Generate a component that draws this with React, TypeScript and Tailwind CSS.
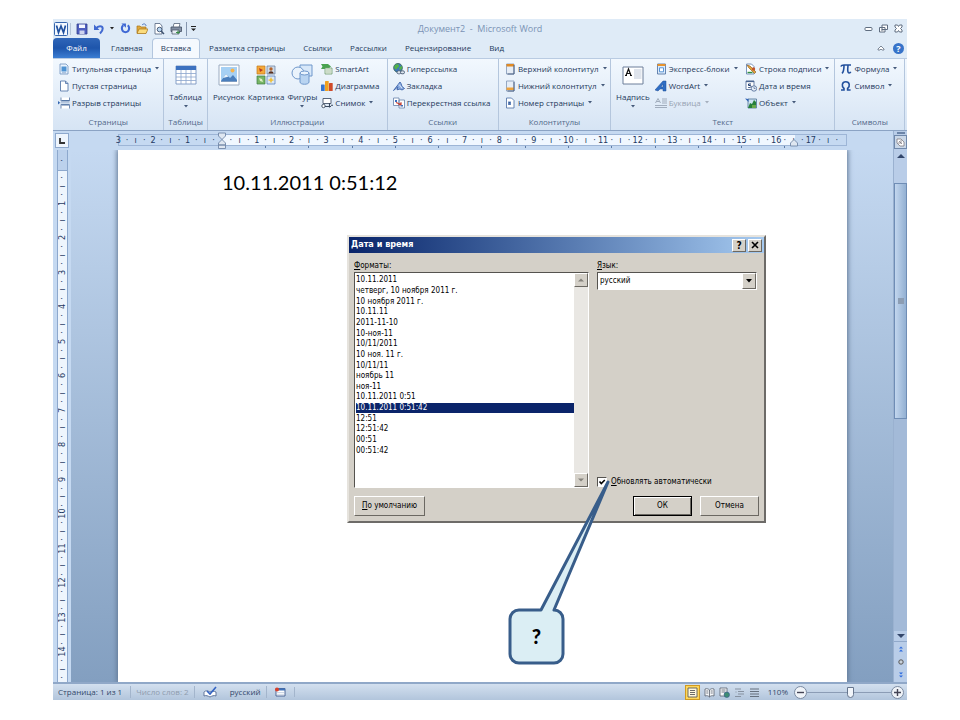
import { useState } from "react"
import type { ReactNode } from "react"

const icons: Record<string, ReactNode> = {
  titlePage: (
    <>
      <path d="M2 1h6l2 2v8H2z" fill="#eaf3fd" stroke="#6d90bd" strokeWidth=".8" />
      <path d="M3.500 3.500h5v5h-5z" fill="#4f93d2" />
      <path d="M4 9.700h4" stroke="#6d90bd" strokeWidth=".6" />
    </>
  ),
  blankPage: <path d="M2.500 1h5l2.500 2.500V11h-7.500zM7.500 1v2.500H10" fill="#fff" stroke="#5a7bab" strokeWidth=".9" />,
  pageBreak: (
    <>
      <path d="M3 .500v3.500h8.500V.500M3 11.500V7.500h8.500v4" fill="#fff" stroke="#6482ad" strokeWidth=".9" />
      <path d="M3.500 3.500h7.500M3.500 8h7.500" stroke="#5577a5" strokeWidth="1.200" />
      <path d="M2.500 5.800h9" stroke="#8da5c5" strokeWidth=".7" />
      <path d="M0 4 2.200 5.800 0 7.600z" fill="#3567b1" />
    </>
  ),
  smartArt: (
    <>
      <path d="M0 1h7l3 2.500-3 2.500H0l1.500-2.500z" fill="#49a350" />
      <path d="M4 5h7v6H4z" fill="#eef5e8" stroke="#6c9a70" strokeWidth=".8" />
      <path d="M5 7h5M5 9h5" stroke="#8eaf90" strokeWidth=".7" />
    </>
  ),
  chart: (
    <>
      <rect x="0" y="4.500" width="3.700" height="6.500" rx=".6" fill="#3474cf" />
      <rect x="4" y="1" width="3.700" height="10" rx=".6" fill="#f0a020" />
      <rect x="8" y="3" width="3.700" height="8" rx=".6" fill="#cf4a2a" />
    </>
  ),
  screenshot: (
    <>
      <path d="M2 1.500h8v5H2z" fill="#fff" stroke="#47566b" strokeWidth=".9" />
      <path d="M3 9.500h7M8.500 6v4.500M10 8.200h2" fill="none" stroke="#39495e" strokeWidth="1.100" />
      <circle cx="2.500" cy="9" r="1.700" fill="#fff" stroke="#39495e" strokeWidth=".9" />
    </>
  ),
  link: (
    <>
      <circle cx="5" cy="4.800" r="4.400" fill="#3f78bb" stroke="#2d5a43" strokeWidth=".7" />
      <path d="M1.500 3C3 .800 5.500 1 6 2.500S4 4.500 3.500 6.500C2 6.300.800 5 1.500 3zM6 5l2.500-2.500L9.200 5 7 7.500z" fill="#52b446" />
      <rect x="4" y="7.800" width="4" height="3" rx="1.500" fill="#dde5ee" stroke="#4c5d76" strokeWidth=".9" />
      <rect x="7.500" y="7.800" width="4" height="3" rx="1.500" fill="#dde5ee" stroke="#4c5d76" strokeWidth=".9" />
    </>
  ),
  bookmark: (
    <>
      <path d="M.500 10.500 4 6l3-4 1 1.500 1 3 2.500 2-2.500 1.500-2-1-3 .8 1-3z" fill="#8fb0e4" stroke="#3c62a8" strokeWidth=".9" />
      <path d="M6 4.500 9 8" stroke="#fff" strokeWidth=".7" />
    </>
  ),
  crossRef: (
    <>
      <path d="M.500 1h5.500v7.500H.500zM6 3h5.500v8H6z" fill="#fff" stroke="#6680a8" strokeWidth=".8" />
      <path d="M2 3h2v2H2zM7.500 8h2.500v1.500H7.500z" fill="#3b6fc0" />
      <path d="M3 5.500 8 7.500M8 5.200v2.500H5.500" fill="none" stroke="#c43d31" strokeWidth="1.200" />
    </>
  ),
  header: (
    <>
      <path d="M2.500 1h7.500v10H2.500z" fill="#e6edf6" stroke="#7f95b5" strokeWidth=".8" />
      <path d="M2.500 1h7.500v2.500H2.500z" fill="#e08a25" />
      <path d="M10 2v9H3.500" fill="none" stroke="#4c6285" />
    </>
  ),
  footer: (
    <>
      <path d="M2.500 1h7.500v10H2.500z" fill="#e6edf6" stroke="#7f95b5" strokeWidth=".8" />
      <path d="M2.500 7.500h7.500V10H2.500z" fill="#eda23c" />
      <path d="M10 2v9H3.500" fill="none" stroke="#4c6285" />
    </>
  ),
  pageNumber: (
    <>
      <path d="M2.500 1h5L10 3.500V11H2.500z" fill="#fff" stroke="#5a7bab" strokeWidth=".9" />
      <path d="M4 4.500h3v3.500H4z" fill="#6d8fc4" />
      <path d="M4.800 5.500h1.500M4.800 7h1.500" stroke="#21457f" strokeWidth=".7" />
    </>
  ),
  quickParts: (
    <>
      <path d="M2.500 1h8v10h-8z" fill="#dcebfb" stroke="#46699d" strokeWidth=".8" />
      <path d="M2.500 1h8v2h-8z" fill="#e7932c" />
      <path d="M4.500 4.800h4v4h-4z" fill="#fff" stroke="#4a8ad0" strokeWidth=".9" />
    </>
  ),
  wordArt: (
    <path d="M0 10 8 1h3v10H8V9H5l-2 2zM6 7h2V4z" fill="#2f6ec4" stroke="#1f4d96" strokeWidth=".5" fillRule="evenodd" />
  ),
  dropCap: (
    <path d="M.500 6 3 1.500 5.500 6M1.500 4.500h3M7 2h5M7 4h5M7 6h5M0 8.500h12M0 10.500h12" fill="none" stroke="#9aa6b6" strokeWidth=".9" />
  ),
  signature: (
    <>
      <path d="M1.500 1h5L9 3.500V11H1.500z" fill="#fff" stroke="#5a7bab" strokeWidth=".8" />
      <path d="m2 2 3 1 6 6-1.500 1.500-6-6z" fill="#e3a43c" stroke="#80551c" strokeWidth=".6" />
      <circle cx="8.500" cy="6" r="1.700" fill="#c2562d" />
      <path d="M2.500 9.500h5" stroke="#2f8f40" strokeWidth="1.400" />
    </>
  ),
  dateTime: (
    <>
      <path d="M1 1h8v8.500H1z" fill="#fff" stroke="#4a6692" strokeWidth=".8" />
      <path d="M1 1.500h8" stroke="#4a6692" strokeWidth="1.300" />
      <path d="M6 4H3.500v1.500h1.500c2 0 1.500 2.500-1.700 2" fill="none" stroke="#1f3d70" />
      <circle cx="9" cy="8.500" r="2.700" fill="#e8f1fb" stroke="#4a6692" strokeWidth=".8" />
      <path d="M9 7v1.500h1.500" fill="none" stroke="#4a6692" strokeWidth=".7" />
    </>
  ),
  object: (
    <>
      <path d="M3 2h8.500v9H3z" fill="#cfe3f3" stroke="#4b7292" strokeWidth=".8" />
      <path d="M3 11 5 6l2 1 2-4 2 2v6z" fill="#27803a" />
      <path d="M0 1.500l3.500.500v3z" fill="#2e62b5" />
      <path d="M7 8h4v3H7z" fill="#6aa84b" />
    </>
  ),
  pi: <path d="M.800 3.500C1.500 2 2.500 2 4 2h7M4 2.500C4 6 3.500 9 2 10.300M8 2.500c-.4 4-.6 7.500 1.200 7.500.8 0 1.300-.5 1.500-1.200" fill="none" stroke="#22509d" strokeWidth="1.600" />,
  omega: <path d="M1 10h3V8.500C1.300 6.500 1.800 1.800 5.800 1.800S10.300 6.500 7.600 8.500V10h3" fill="none" stroke="#22509d" strokeWidth="1.600" />,
  save: (
    <>
      <path d="M1 1h10v10H1z" fill="#4f5fc0" stroke="#333f8e" strokeWidth=".8" />
      <path d="M3 1.500h6V5H3z" fill="#f4f7ff" />
      <path d="M3.500 7.500h5V11h-5z" fill="#cdd4ee" />
    </>
  ),
  undo: (
    <>
      <path d="M3 5.500C5 2.500 9.500 2.500 9.700 5.500 9.800 7.500 8.500 9 7 10.500" fill="none" stroke="#4169d0" strokeWidth="2" />
      <path d="M1 1.500V7h5.500z" fill="#4169d0" />
    </>
  ),
  redo: (
    <>
      <path d="M3.500 2.500C.800 5 2 10 6 10s5.200-5 2.500-7.500" fill="none" stroke="#3f68d4" strokeWidth="2.200" />
      <path d="M1.500.500h5v4.800z" fill="#3f68d4" />
    </>
  ),
  open: (
    <>
      <path d="M1 10V3h3l1 1h5v6z" fill="#e0a93c" stroke="#a87418" strokeWidth=".7" />
      <path d="M1 10.500 3 6h9l-2 4.500z" fill="#fbdc7d" stroke="#a87418" strokeWidth=".7" />
      <path d="M6 2c2-2 4-1 4 1" fill="none" stroke="#4d76bd" />
    </>
  ),
  preview: (
    <>
      <path d="M2 .5h5L9 3v8H2z" fill="#fff" stroke="#50627e" strokeWidth=".8" />
      <circle cx="6.500" cy="6.500" r="2.300" fill="#b9d7f3" stroke="#3e526f" strokeWidth=".9" />
      <path d="m8 8 3 3" stroke="#3e526f" strokeWidth="1.400" />
    </>
  ),
  print: (
    <>
      <path d="M4 .500h6L9 4.500H3z" fill="#fff" stroke="#56647a" strokeWidth=".8" />
      <path d="M1 4h10.500v4.500H1z" fill="#8390a4" stroke="#424e62" strokeWidth=".8" />
      <path d="M2 7h7v4H2z" fill="#e8edf4" stroke="#424e62" strokeWidth=".7" />
      <path d="M6 9.500h4M8 7.500v3.500" stroke="#3c8c48" strokeWidth="1.200" />
    </>
  ),
}

function Icon({ name, className = "size-3" }: { name: string; className?: string }) {
  return (
    <svg viewBox="0 0 12 12" className={`${className} shrink-0`} aria-hidden="true">
      {icons[name]}
    </svg>
  )
}

function Caret({ className = "fill-[#44597a]" }: { className?: string }) {
  return (
    <svg viewBox="0 0 4 3" className={`w-1 h-[3px] shrink-0 ${className}`} aria-hidden="true">
      <path d="M0 0h4L2 2.500z" />
    </svg>
  )
}

type Item = { icon: string; label: string; menu?: boolean; disabled?: boolean }

function SmallButtons({ items }: { items: Item[] }) {
  return (
    <div className="flex flex-col">
      {items.map((item) => (
        <button
          key={item.label}
          disabled={item.disabled}
          className="flex h-[17px] items-center gap-[2px] whitespace-nowrap disabled:text-[#98a3b3]"
        >
          <Icon name={item.icon} />
          <span>{item.label}</span>
          {item.menu && <Caret className={item.disabled ? "ml-[2px] fill-[#a5afbd]" : "ml-[2px] fill-[#44597a]"} />}
        </button>
      ))}
    </div>
  )
}

function BigButton({ label, menu, children }: { label: string; menu?: boolean; children: ReactNode }) {
  return (
    <button className="flex flex-col items-center pt-1 whitespace-nowrap">
      <svg viewBox="0 0 22 22" className="size-[22px]" aria-hidden="true">
        {children}
      </svg>
      <span className="mt-1 mb-[2px] h-[13px] leading-[13px]">{label}</span>
      {menu && <Caret />}
    </button>
  )
}

function Group({ title, className, children }: { title: string; className: string; children: ReactNode }) {
  return (
    <section className={`flex min-w-0 flex-col border-r border-[#b4c6dd] pt-px ${className}`}>
      <div className="flex flex-1 items-start px-[5px]">{children}</div>
      <h2 className="h-4 text-center leading-4 text-[#52698a]">{title}</h2>
    </section>
  )
}

const tabs = ["Главная", "Вставка", "Разметка страницы", "Ссылки", "Рассылки", "Рецензирование", "Вид"]

function TitleBar() {
  return (
    <header className="flex h-[19px] items-center bg-[#dfebf7] pr-1 pl-px">
      <svg viewBox="0 0 14 14" className="size-[14px]" aria-hidden="true">
        <rect x=".5" y=".5" width="13" height="13" rx="1" fill="#f4f9ff" stroke="#3666ae" />
        <path d="m2.500 3.500 2 7L7 4l2.500 6.500 2-7" fill="none" stroke="#1f509f" strokeWidth="1.700" />
      </svg>
      <div className="ml-[2px] flex items-center gap-[5px] border-l border-[#b4c4d8] pl-[5px]">
        <button aria-label="Сохранить"><Icon name="save" /></button>
        <button aria-label="Отменить" className="flex items-center gap-[5px]"><Icon name="undo" /><Caret className="fill-[#222]" /></button>
        <button aria-label="Повторить" className="ml-px"><Icon name="redo" className="size-[11px]" /></button>
        <button aria-label="Открыть"><Icon name="open" /></button>
        <button aria-label="Просмотр"><Icon name="preview" /></button>
        <button aria-label="Печать"><Icon name="print" /></button>
      </div>
      <button aria-label="Настройка панели" className="ml-1 border-l border-[#8495ad] px-1 py-1">
        <svg viewBox="0 0 5 6" className="h-[6px] w-[5px]" aria-hidden="true">
          <path d="M0 0h5v1H0zM0 2.500h5L2.500 5z" fill="#222" />
        </svg>
      </button>
      <h1 className="flex-1 pr-26 text-center text-[9px] whitespace-pre text-[#7b93b5]">{"Документ2  -  Microsoft Word"}</h1>
      <div className="flex items-center gap-[6px]">
        <button aria-label="Свернуть">
          <svg viewBox="0 0 9 9" className="size-[9px]"><rect x="1" y="3.500" width="7" height="3" rx="1" fill="#fff" stroke="#5f6d80" /></svg>
        </button>
        <button aria-label="Восстановить">
          <svg viewBox="0 0 9 9" className="size-[9px]"><path d="M3 1h5.500v4.500H3zM.500 3.500H6V8H.500zM2 6h2.500" fill="#fff" stroke="#5f6d80" /></svg>
        </button>
        <button aria-label="Закрыть">
          <svg viewBox="0 0 9 9" className="size-[9px]">
            <path d="M1 1h2.500l1 1.500 1-1.500H8v2L6.500 4.500 8 6v2H5.500l-1-1.500-1 1.500H1V6l1.500-1.500L1 3z" fill="#fff" stroke="#5f6d80" />
          </svg>
        </button>
      </div>
    </header>
  )
}

function Ribbon() {
  return (
    <>
      <nav className="flex h-5 items-stretch bg-[#dfebf7] pr-[3px]">
        <button className="mr-[2px] w-[47px] rounded-t-sm bg-linear-to-b from-[#2f66b9] via-[#1e55ab] to-[#3c7ed3] text-white">Файл</button>
        {tabs.map((tab) => (
          <button
            key={tab}
            className={
              tab === "Вставка"
                ? "rounded-t-sm border border-b-0 border-[#b3c6de] bg-[#f5f9fe] px-2 pb-px whitespace-nowrap"
                : "px-[9px] whitespace-nowrap"
            }
          >
            {tab}
          </button>
        ))}
        <div className="flex flex-1 items-center justify-end gap-2">
          <button aria-label="Свернуть ленту">
            <svg viewBox="0 0 8 6" className="h-[6px] w-2"><path d="M1 4 4 1l3 3v1H5L4 4 3 5H1z" fill="#fff" stroke="#5f6d80" strokeWidth=".8" /></svg>
          </button>
          <button aria-label="Справка" className="size-[11px] rounded-full bg-[#3773c9] text-[9px] leading-[11px] font-bold text-white">?</button>
        </div>
      </nav>
      <div className="flex h-[73px] border-t border-b border-t-[#b9cbe2] border-b-[#8ba3c4] bg-linear-to-b from-[#f2f8fe] to-[#d6e4f4]">
        <Group title="Страницы" className="flex-[111_1_0%]">
          <SmallButtons
            items={[
              { icon: "titlePage", label: "Титульная страница", menu: true },
              { icon: "blankPage", label: "Пустая страница" },
              { icon: "pageBreak", label: "Разрыв страницы" },
            ]}
          />
        </Group>
        <Group title="Таблицы" className="flex-[43_1_0%]">
          <div className="flex flex-1 justify-center">
            <BigButton label="Таблица" menu>
              <path d="M1 2h20v18H1z" fill="#fff" stroke="#6d8cba" strokeWidth=".8" />
              <path d="M1 2h20v4H1z" fill="#3c71bf" />
              <path d="M1 9.500h20M1 13h20M1 16.500h20M6 6v14M11 6v14M16 6v14" stroke="#8ba5cd" strokeWidth=".8" />
            </BigButton>
          </div>
        </Group>
        <Group title="Иллюстрации" className="flex-[180_1_0%]">
          <div className="flex gap-[3px]">
            <BigButton label="Рисунок">
              <path d="M1 1h20v20H1z" fill="#fff" stroke="#9babc0" />
              <path d="M3 3h16v14H3z" fill="#a6d0f4" />
              <path d="m3 17 5-7 4 4 3-3 4 5v1z" fill="#4b7fbd" />
              <path d="m5 14 3-4 2.500 2.500L9 13z" fill="#e9f3fb" />
              <circle cx="14.500" cy="6.500" r="2" fill="#f6b44d" />
              <path d="M3 17h16v1H3z" fill="#7e9cc2" />
            </BigButton>
            <BigButton label="Картинка">
              <path d="M2 2h8v8H2z" fill="#f4a93a" stroke="#c27a1a" strokeWidth=".7" />
              <path d="m4 4 4 2-3 2z" fill="#b73a20" />
              <path d="M12 2h8v8h-8z" fill="#cfdbe9" stroke="#60789c" strokeWidth=".7" />
              <circle cx="16" cy="5" r="1.700" fill="#b5652b" />
              <path d="M13.500 9.500c0-3 5-3 5 0z" fill="#5a2f1c" />
              <path d="M2 12h8v8H2z" fill="#78b665" stroke="#3c7b45" strokeWidth=".7" />
              <path d="m4 14 3 1 1 3-3-1z" fill="#dff0c8" />
              <path d="M12 12h8v8h-8z" fill="#dbe8f7" stroke="#4b73b2" strokeWidth=".7" />
              <path d="m16 13 1 2.300 2.300.7-2.300 1-1 2.300-1-2.300-2.300-1 2.300-.7z" fill="#f0c13a" />
            </BigButton>
            <BigButton label="Фигуры" menu>
              <path d="M9 1h12v11H9z" fill="#d8e8f9" stroke="#6f97cb" />
              <circle cx="7" cy="9" r="6" fill="#eaf3fc" stroke="#6f97cb" />
              <path d="M9 9v9c0 3 9 3 9 0V9" fill="#b9d4f1" stroke="#6f97cb" />
              <ellipse cx="13.500" cy="9" rx="4.500" ry="2" fill="#e9f3fd" stroke="#6f97cb" />
            </BigButton>
          </div>
          <div className="pl-1">
            <SmallButtons
              items={[
                { icon: "smartArt", label: "SmartArt" },
                { icon: "chart", label: "Диаграмма" },
                { icon: "screenshot", label: "Снимок", menu: true },
              ]}
            />
          </div>
        </Group>
        <Group title="Ссылки" className="flex-[111_1_0%]">
          <SmallButtons
            items={[
              { icon: "link", label: "Гиперссылка" },
              { icon: "bookmark", label: "Закладка" },
              { icon: "crossRef", label: "Перекрестная ссылка" },
            ]}
          />
        </Group>
        <Group title="Колонтитулы" className="flex-[112_1_0%]">
          <SmallButtons
            items={[
              { icon: "header", label: "Верхний колонтитул", menu: true },
              { icon: "footer", label: "Нижний колонтитул", menu: true },
              { icon: "pageNumber", label: "Номер страницы", menu: true },
            ]}
          />
        </Group>
        <Group title="Текст" className="flex-[225_1_0%]">
          <BigButton label="Надпись" menu>
            <path d="M1 3h20v17H1z" fill="#fff" stroke="#6d7f9a" />
            <path d="M12 5h7.500v10H12z" fill="#dfe4ec" />
            <path d="m4 11.500 2.500-6.500L9 11.500M5 9.500h3M3 11.500h2M8 11.500h2" fill="none" stroke="#111" strokeWidth="1.200" />
          </BigButton>
          <div className="flex flex-1 justify-between pl-[5px]">
            <SmallButtons
              items={[
                { icon: "quickParts", label: "Экспресс-блоки", menu: true },
                { icon: "wordArt", label: "WordArt", menu: true },
                { icon: "dropCap", label: "Буквица", menu: true, disabled: true },
              ]}
            />
            <SmallButtons
              items={[
                { icon: "signature", label: "Строка подписи", menu: true },
                { icon: "dateTime", label: "Дата и время" },
                { icon: "object", label: "Объект", menu: true },
              ]}
            />
          </div>
        </Group>
        <Group title="Символы" className="flex-[69_1_0%]">
          <SmallButtons
            items={[
              { icon: "pi", label: "Формула", menu: true },
              { icon: "omega", label: "Символ", menu: true },
            ]}
          />
        </Group>
        <div className="w-[2px]" />
      </div>
    </>
  )
}

// quarter-centimetre marks: number, dot, dash, dot
function markAt(quarter: number) {
  if (quarter === 0) return ""
  if (quarter % 4 === 0) return String(Math.abs(quarter / 4))
  return quarter % 2 === 0 ? "ı" : "·"
}

const horizontalMarks = Array.from({ length: 84 }, (_, i) => i - 12)
const verticalMarks = Array.from({ length: 61 }, (_, i) => i - 1)

function HorizontalRuler() {
  return (
    <div className="h-[19px] pt-[3px] pr-[46px] pl-[47px]">
      <div className="relative h-3 border border-[#9db5d6] bg-[linear-gradient(90deg,#c5d9f1_14.3%,#f0f7ff_14.3%,#f0f7ff_93%,#c5d9f1_93%)]">
        <div className="-ml-[5px] mr-[5px] flex h-full font-['DejaVu_Sans_Condensed','DejaVu_Sans',sans-serif] text-[9px] leading-[10px] text-[#1f3a63]">
          {horizontalMarks.map((q) => (
            <span key={q} className="relative flex min-w-0 flex-1 basis-0 justify-center">
              {markAt(q)}
              {q > 0 && q < 68 && q % 5 === 0 && <i className="absolute top-[11px] h-[2px] w-px bg-[#5d7ba6]" />}
            </span>
          ))}
        </div>
        <svg viewBox="0 0 10 18" className="absolute -top-[3px] left-[14.300%] -ml-[6px] h-[18px] w-[10px]" aria-hidden="true">
          <path d="M1.500 1h7v3L5 7.500 1.500 4zM1.500 13V11L5 7.500 8.500 11v2zM1.500 13h7v3.500h-7z" fill="#dfe7f1" stroke="#7288a8" strokeWidth=".9" />
        </svg>
        <svg viewBox="0 0 10 9" className="absolute top-[3px] left-[93%] -ml-[6px] h-[9px] w-[10px]" aria-hidden="true">
          <path d="M1.500 8V5L5 1.500 8.500 5v3z" fill="#dfe7f1" stroke="#7288a8" strokeWidth=".9" />
        </svg>
      </div>
    </div>
  )
}

function VerticalRuler() {
  return (
    <div className="flex w-[18px] flex-col">
      <button aria-label="Табуляция" className="m-[2px] flex h-[15px] items-center justify-center border border-[#8da8cd] bg-[#eef5fd]">
        <svg viewBox="0 0 6 6" className="size-[6px]"><path d="M1 0v5h5" fill="none" stroke="#333" strokeWidth="1.800" /></svg>
      </button>
      <div className="mr-[3px] ml-1 min-h-0 flex-1 overflow-hidden border-x border-[#8da8cd] bg-[linear-gradient(180deg,#bcd1ec_20px,#8da8cd_20px,#8da8cd_21px,#eef5fd_21px)] pt-[6px]">
        <div className="flex h-full flex-col font-['DejaVu_Sans_Condensed','DejaVu_Sans',sans-serif] text-[9px] leading-none text-[#1f3a63]">
          {verticalMarks.map((q) => (
            <span key={q} className="flex min-h-0 flex-1 basis-0 items-center justify-center">
              <span className="-rotate-90">{markAt(q)}</span>
            </span>
          ))}
        </div>
      </div>
    </div>
  )
}

function ScrollBar() {
  return (
    <div className="flex w-[14px] flex-col items-center border-l border-[#9ab1d0] bg-[#b9cde8]">
      <div className="mt-px h-[2px] w-2 bg-[#6b84a8]" />
      <button aria-label="Линейка" className="mt-px flex h-[14px] w-[13px] items-center justify-center border border-[#6f88ab] bg-[#c9d7e8]">
        <svg viewBox="0 0 9 9" className="size-[9px]"><path d="M1 1h4l3 3v4H4L1 5zM3 3l3 3M5 2v3H2" fill="#fff" stroke="#7e7a80" strokeWidth=".8" /></svg>
      </button>
      <button aria-label="Вверх" className="flex h-[34px] w-full justify-center pt-[5px]">
        <svg viewBox="0 0 8 4" className="h-1 w-2"><path d="M0 4 4 0l4 4z" fill="#33476b" /></svg>
      </button>
      <div className="flex w-full flex-[235_1_0%] items-center justify-center border border-[#6f8db5] bg-linear-to-r from-[#c2d6ee] to-[#93b0d2]">
        <div className="size-[6px] bg-[#8c9db3]" />
      </div>
      <div className="w-full flex-[213_1_0%] bg-[#a3bad8]" />
      <button aria-label="Вниз" className="flex h-[11px] w-full items-center justify-center border-b border-[#91a9ca]">
        <svg viewBox="0 0 8 4" className="h-1 w-2"><path d="M0 0h8L4 4z" fill="#33476b" /></svg>
      </button>
      <div className="flex h-10 flex-col items-center justify-around">
        <svg viewBox="0 0 6 6" className="size-[6px]"><path d="M1 2.500 3 .5l2 2zM1 5.500l2-2 2 2z" fill="#2c6be0" /></svg>
        <svg viewBox="0 0 6 6" className="size-[6px]"><circle cx="3" cy="3" r="2.200" fill="#c9d2dc" stroke="#555" /></svg>
        <svg viewBox="0 0 6 6" className="size-[6px]"><path d="M1 .5h4l-2 2zM1 3.500h4l-2 2z" fill="#2c6be0" /></svg>
      </div>
    </div>
  )
}

const formats = [
  "10.11.2011",
  "четверг, 10 ноября 2011 г.",
  "10 ноября 2011 г.",
  "10.11.11",
  "2011-11-10",
  "10-ноя-11",
  "10/11/2011",
  "10 ноя. 11 г.",
  "10/11/11",
  "ноябрь 11",
  "ноя-11",
  "10.11.2011 0:51",
  "10.11.2011 0:51:42",
  "12:51",
  "12:51:42",
  "00:51",
  "00:51:42",
]

const raised = "border border-t-white border-l-white border-r-[#6b6862] border-b-[#6b6862] bg-[#d4d0c8]"
const sunken = "border border-t-[#55534f] border-l-[#55534f] border-r-white border-b-white bg-white"

function ListArrow({ up }: { up?: boolean }) {
  return (
    <button aria-label={up ? "Вверх" : "Вниз"} className={`flex size-[14px] items-center justify-center ${raised}`}>
      <svg viewBox="0 0 6 4" className="h-1 w-[6px]"><path d={up ? "M0 3.500 3 .5l3 3z" : "M0 .5h6l-3 3z"} fill="#85827c" /></svg>
    </button>
  )
}

function DateTimeDialog() {
  const [selected, setSelected] = useState("10.11.2011 0:51:42")
  const [autoUpdate, setAutoUpdate] = useState(true)

  return (
    <div
      role="dialog"
      aria-labelledby="dialog-title"
      className="absolute top-[104px] left-[294px] w-[419px] border-2 border-t-[#e6e3dd] border-r-[#6d6b68] border-b-[#6d6b68] border-l-[#e6e3dd] bg-[#d4d0c8] font-['DejaVu_Sans_Condensed','DejaVu_Sans',sans-serif] text-[8px] text-black"
    >
      <div className="flex h-4 items-center gap-[2px] bg-linear-to-r from-[#0a246a] to-[#a6caf0] pr-[2px] pl-[2px]">
        <h2 id="dialog-title" className="flex-1 text-[9px] font-bold text-white">Дата и время</h2>
        <button aria-label="Справка" className={`h-[13px] w-[14px] text-[10px] leading-[11px] font-bold ${raised}`}>?</button>
        <button aria-label="Закрыть" className={`flex h-[13px] w-[14px] items-center justify-center ${raised}`}>
          <svg viewBox="0 0 8 8" className="size-2"><path d="m1 1 6 6M7 1 1 7" stroke="#000" strokeWidth="1.600" /></svg>
        </button>
      </div>
      <div className="flex gap-2 px-[5px] pt-[6px]">
        <div className="w-[235px]">
          <div id="formats-label" className="h-[13px] leading-[13px]"><u>Ф</u>орматы:</div>
          <div className={`flex h-[216px] justify-between ${sunken}`}>
            <ul role="listbox" aria-labelledby="formats-label" className="grid h-[183px] flex-1 auto-rows-fr pt-[2px] pl-px">
              {formats.map((format) => (
                <li
                  key={format}
                  role="option"
                  aria-selected={format === selected}
                  onClick={() => setSelected(format)}
                  className={format === selected ? "flex items-center bg-[#0a246a] text-white" : "flex items-center"}
                >
                  {format}
                </li>
              ))}
            </ul>
            <div className="flex flex-col justify-between bg-[#e9e7e3]">
              <ListArrow up />
              <ListArrow />
            </div>
          </div>
        </div>
        <div className="flex flex-1 flex-col">
          <label htmlFor="language" className="h-[13px] leading-[13px]"><u>Я</u>зык:</label>
          <div className={`relative mr-[2px] h-[18px] ${sunken}`}>
            <select id="language" defaultValue="ru" className="h-full w-full appearance-none bg-white pl-[2px]">
              <option value="ru">русский</option>
            </select>
            <span className={`pointer-events-none absolute top-0 right-0 flex h-4 w-[14px] items-center justify-center ${raised}`}>
              <svg viewBox="0 0 6 4" className="h-1 w-[6px]"><path d="M0 0h6L3 3.500z" /></svg>
            </span>
          </div>
          <div className="mt-auto flex items-center gap-1">
            <span className="relative size-[10px]">
              <input
                id="auto-update"
                type="checkbox"
                checked={autoUpdate}
                onChange={(e) => setAutoUpdate(e.target.checked)}
                className={`block size-[10px] appearance-none ${sunken}`}
              />
              {autoUpdate && (
                <svg viewBox="0 0 10 10" className="pointer-events-none absolute inset-0"><path d="M2.500 4.500 4.300 6.500 7.800 3" fill="none" stroke="#000" strokeWidth="1.600" /></svg>
              )}
            </span>
            <label htmlFor="auto-update"><u>О</u>бновлять автоматически</label>
          </div>
        </div>
      </div>
      <div className="flex gap-2 px-[5px] pt-2 pb-[5px]">
        <button className={`mr-auto h-5 w-[71px] ${raised}`}><u>П</u>о умолчанию</button>
        <button className="h-5 w-[59px] border border-black bg-[#d4d0c8] shadow-[inset_1px_1px_#fff,inset_-1px_-1px_#6b6862]">ОК</button>
        <button className={`h-5 w-[59px] ${raised}`}>Отмена</button>
      </div>
    </div>
  )
}

function Callout() {
  return (
    <div className="absolute top-[346px] left-[455px] h-[188px] w-[106px]">
      <svg viewBox="0 0 106 188" className="absolute inset-0" aria-hidden="true">
        <path
          d="M11 133H33L100 5 46 133C51 133 55 137 55 142V177C55 182 51 186 46 186H11C6 186 2 182 2 177V142C2 137 6 133 11 133Z"
          fill="#dbeef4"
          stroke="#385d8a"
          strokeWidth="3"
          strokeLinejoin="round"
        />
      </svg>
      <p className="relative mt-[132px] flex h-[54px] w-[57px] items-center justify-center font-['Lato','Open_Sans',sans-serif] text-xl font-black text-black">?</p>
    </div>
  )
}

function StatusBar() {
  return (
    <footer className="flex h-[18px] items-center border-t-2 border-[#90a8c8] bg-linear-to-b from-[#d3e0ef] to-[#b2c5dc] pr-[3px] pl-[5px] text-[#33486a]">
      <span className="border-r border-[#a3b5cc] pr-2">Страница: 1 из 1</span>
      <span className="border-r border-[#a3b5cc] px-[5px] text-[#8f9cae]">Число слов: 2</span>
      <button aria-label="Правописание" className="px-2">
        <svg viewBox="0 0 14 12" className="h-3 w-[14px]">
          <path d="M1 6c2-2 4-1 6 0 2-1 4-1 6 0v4c-2-1-4 0-6 1-2-1-4-2-6-1z" fill="#fff" stroke="#556c94" strokeWidth=".9" />
          <path d="m4 5 3 3 6-7" fill="none" stroke="#3464c3" strokeWidth="1.600" />
        </svg>
      </button>
      <span className="border-r border-[#a3b5cc] px-[5px]">русский</span>
      <button aria-label="Запись макроса" className="ml-[7px] border-r border-[#a3b5cc] pr-2">
        <svg viewBox="0 0 12 10" className="h-[10px] w-3">
          <path d="M2 1.500h9V9H2z" fill="#fff" stroke="#4c6796" />
          <path d="M2 2.500h9" stroke="#4172b8" strokeWidth="2" />
          <path d="M3 5.500h7M3 7.300h7" stroke="#b8c6db" strokeWidth=".7" />
          <circle cx="3" cy="2.500" r="2" fill="#d8402a" />
        </svg>
      </button>
      <div className="ml-auto flex items-center gap-1">
        <button aria-label="Разметка страницы" className="border border-[#d19a1f] bg-[#fdd75c] p-px">
          <svg viewBox="0 0 11 11" className="size-[11px]"><path d="M1 1h9v9H1zM3 3.500h5M3 5.500h5M3 7.500h5" fill="#fff8dc" stroke="#5c5c5c" strokeWidth=".9" /></svg>
        </button>
        <button aria-label="Режим чтения">
          <svg viewBox="0 0 11 11" className="size-[11px]"><path d="M1 2c2-.8 3.500 0 4.500 1C6.500 2 8 1.200 10 2v7C8 8.200 6.500 9 5.500 10 4.500 9 3 8.200 1 9zM5.500 3v7M2.300 4h2M2.300 6h2M6.700 4h2M6.700 6h2" fill="#f4f6f9" stroke="#59616d" strokeWidth=".8" /></svg>
        </button>
        <button aria-label="Веб-документ">
          <svg viewBox="0 0 11 11" className="size-[11px]">
            <path d="M1 1h7v8H1zM2.500 3h4M2.500 5h4" fill="#f4f6f9" stroke="#59616d" strokeWidth=".8" />
            <circle cx="7.800" cy="7.800" r="2.700" fill="#3f8c74" stroke="#34588f" strokeWidth=".6" />
          </svg>
        </button>
        <button aria-label="Структура">
          <svg viewBox="0 0 11 11" className="size-[11px]"><path d="M1 2h6M4 4.500h6M4 7h6M1 9.500h6M1.500 5h1" stroke="#8792a1" /></svg>
        </button>
        <button aria-label="Черновик">
          <svg viewBox="0 0 11 11" className="size-[11px]"><path d="M1 2h9M1 4.500h9M1 7h9M1 9.500h9" stroke="#66717f" strokeWidth="1.200" /></svg>
        </button>
        <span className="pl-1">110%</span>
      </div>
      <div className="ml-[6px] flex items-center">
        <button aria-label="Уменьшить" className="flex size-[13px] items-center justify-center rounded-full border border-[#7b8ba2] bg-[#eff3f8]">
          <svg viewBox="0 0 7 7" className="size-[7px]"><path d="M0 3.500h7" stroke="#445" strokeWidth="1.400" /></svg>
        </button>
        <input
          type="range"
          aria-label="Масштаб"
          defaultValue="52"
          className="h-3 w-[84px] appearance-none bg-[linear-gradient(#8b9cb5,#8b9cb5)] bg-[length:100%_1px] bg-center bg-no-repeat [&::-webkit-slider-thumb]:h-[11px] [&::-webkit-slider-thumb]:w-[7px] [&::-webkit-slider-thumb]:appearance-none [&::-webkit-slider-thumb]:rounded-b-full [&::-webkit-slider-thumb]:border [&::-webkit-slider-thumb]:border-[#66768e] [&::-webkit-slider-thumb]:bg-[#f1f5fa]"
        />
        <button aria-label="Увеличить" className="flex size-[13px] items-center justify-center rounded-full border border-[#7b8ba2] bg-[#eff3f8]">
          <svg viewBox="0 0 7 7" className="size-[7px]"><path d="M0 3.500h7M3.500 0v7" stroke="#445" strokeWidth="1.400" /></svg>
        </button>
      </div>
    </footer>
  )
}

export default function App() {
  return (
    <div className="flex h-screen flex-col bg-white px-[53px] pt-[19px] pb-5 font-['Open_Sans','Noto_Sans',sans-serif] text-[8px] text-[#1e395b]">
      <TitleBar />
      <Ribbon />
      <main className="relative flex min-h-0 flex-1 bg-[#c5d9f1]">
        <VerticalRuler />
        <div className="flex min-w-0 flex-1 flex-col">
          <HorizontalRuler />
          <div className="flex min-h-0 flex-1 bg-linear-to-b from-[#c5d9f1] to-[#839fc0] pr-[46px] pl-[47px]">
            <article className="flex-1 bg-white pt-[18px] pl-[104px] font-['Lato','Open_Sans',sans-serif] text-xl text-black shadow-[0_0_5px_1px_#5f7592] [clip-path:inset(0_-10px)]">
              10.11.2011 0:51:12
            </article>
          </div>
        </div>
        <ScrollBar />
        <DateTimeDialog />
        <Callout />
      </main>
      <StatusBar />
    </div>
  )
}
